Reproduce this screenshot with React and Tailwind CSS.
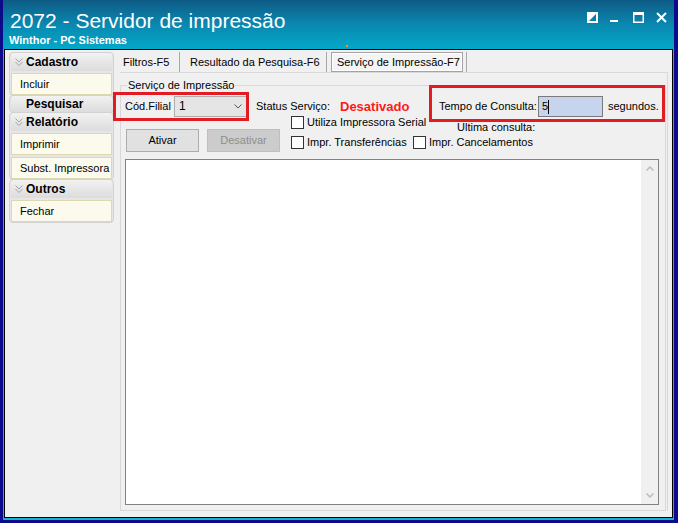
import React from 'react';

function Chevrons() {
  return (
    <svg width="8" height="10" viewBox="0 0 8 10" fill="none" stroke="#a3a3a3" strokeWidth="1">
      <path d="M0.5 1.5l3.5 3.5 3.5-3.5" />
      <path d="M0.5 5l3.5 3.5 3.5-3.5" />
    </svg>
  );
}

function Group({ title, items = [], chevron = true, head = 'h-[18px]', first = false }) {
  return (
    <div className={`rounded-[4px] border border-[#d2d2d2] bg-[#e6e6e6] px-[1px] ${first ? '' : '-mt-px'}`}>
      <div className={`${head} flex items-center rounded-t-[3px] bg-gradient-to-b from-[#f2f2f2] to-[#dcdcdc]`}>
        <span className="w-[15px] flex justify-center">{chevron && <Chevrons />}</span>
        <span className="font-bold text-[12px] leading-[14px]">{title}</span>
      </div>
      {items.map(it => (
        <div key={it} className="mt-[2px] h-[22px] flex items-center pl-[8px] bg-[#fbfaec] border border-[#dcd8b2] whitespace-nowrap">
          {it}
        </div>
      ))}
    </div>
  );
}

function Check({ label, w }) {
  return (
    <div className={`flex items-center ${w || ''}`}>
      <div className="w-[13px] h-[13px] border border-[#333] bg-white" />
      <span className="ml-[3px] whitespace-nowrap">{label}</span>
    </div>
  );
}

export default function App() {
  return (
    <div className="relative w-[678px] h-[523px] bg-[#0b0b8c] pl-[3px] pr-[4px] pb-[3px] flex font-['Liberation_Sans',Arial,sans-serif] text-[11px] leading-[13px] text-black">
      <div className="flex-1 flex flex-col bg-[#14b4cc]">
        {/* barra de título */}
        <div className="relative h-[49px] flex justify-between bg-gradient-to-b from-[#0d5b85] via-[#0a88b0] to-[#02a8c8]">
          <div className="pl-[7px] pt-[10px] text-white">
            <div className="text-[21px] leading-[21px]">2072 - Servidor de impressão</div>
            <div className="mt-[3px] -ml-px font-bold text-[11px] leading-[13px]">Winthor - PC Sistemas</div>
          </div>
          <div className="flex items-start pt-[12px] pr-[7px]">
            <svg width="11" height="11" viewBox="0 0 11 11">
              <rect x="1" y="1" width="9" height="9" fill="none" stroke="#fff" strokeWidth="2" />
              <polygon points="0,0 11,0 0,11" fill="#fff" />
            </svg>
            <svg className="ml-[12px]" width="8" height="11" viewBox="0 0 8 11">
              <rect x="0" y="8" width="8" height="2" fill="#fff" />
            </svg>
            <svg className="ml-[15px]" width="11" height="11" viewBox="0 0 11 11">
              <rect x="0.75" y="1.5" width="9.5" height="8.75" fill="none" stroke="#fff" strokeWidth="1.5" />
              <rect x="0" y="0" width="11" height="3" fill="#fff" />
            </svg>
            <svg className="ml-[12px]" width="11" height="11" viewBox="0 0 11 11" stroke="#fff" strokeWidth="2">
              <path d="M1 1l9 9M10 1l-9 9" />
            </svg>
          </div>
          <div className="absolute left-[343px] top-[45px] w-[2px] h-[2px] bg-[#f7941d]" />
        </div>

        {/* corpo */}
        <div className="mx-[1px] h-[469px] border border-black bg-[#f0f0f0] flex">
          {/* menu lateral */}
          <div className="ml-[4px] mt-[2px] w-[105px] shrink-0">
            <Group title="Cadastro" items={['Incluir']} first />
            <Group title="Pesquisar" chevron={false} head="h-[16px]" />
            <Group title="Relatório" items={['Imprimir', 'Subst. Impressora']} />
            <Group title="Outros" items={['Fechar']} />
          </div>

          {/* área principal */}
          <div className="ml-[6px] mr-[4px] mb-[6px] flex-1 flex flex-col">
            <div className="h-[22px] flex items-end">
              <div className="w-[59px] h-[20px] pl-[3px] flex items-center">Filtros-F5</div>
              <div className="w-px h-[20px] bg-[#a8a8a8]" />
              <div className="w-[146px] h-[20px] pl-[10px] flex items-center whitespace-nowrap">Resultado da Pesquisa-F6</div>
              <div className="w-px h-[20px] bg-[#a8a8a8]" />
              <div className="ml-[4px] w-[132px] h-[20px] pl-[5px] flex items-center whitespace-nowrap bg-[#f4f4f4] border border-[#a3a3a3] shadow-[inset_1px_1px_0_#fff,inset_-1px_-1px_0_#fff]">
                Serviço de Impressão-F7
              </div>
              <div className="ml-[3px] w-px h-[20px] bg-[#a8a8a8]" />
            </div>

            <div className="flex-1 flex flex-col border-t border-r border-[#d9d9d9] pt-[12px]">
              <div className="relative flex-1 flex flex-col mr-px border border-[#d9d9d9]">
                <span className="absolute -top-[7px] left-[6px] px-px bg-[#f0f0f0] leading-[13px]">Serviço de Impressão</span>

                {/* linha 1 */}
                <div className="mt-[10px] pl-[4px] h-[21px] flex items-center">
                  <span className="w-[49px]">Cód.Filial</span>
                  <div className="w-[73px] h-[21px] flex items-center justify-between pl-[4px] pr-[4px] bg-[#e5e5e5] border border-[#adadad]">
                    <span className="text-[12px]">1</span>
                    <svg width="8" height="5" viewBox="0 0 8 5" fill="none" stroke="#555" strokeWidth="1">
                      <path d="M0.5 0.5l3.5 3.5 3.5-3.5" />
                    </svg>
                  </div>
                  <span className="ml-[9px] w-[84px]">Status Serviço:</span>
                  <span className="w-[99px] font-bold text-[13px] text-[#ff1a1a]">Desativado</span>
                  <span className="w-[99px] whitespace-nowrap">Tempo de Consulta:</span>
                  <div className="w-[65px] h-[21px] flex items-center pl-[3px] bg-[#c6d4ee] border border-[#7a7a7a]">
                    <span>5</span>
                    <span className="w-px h-[14px] bg-black" />
                  </div>
                  <span className="ml-[5px]">segundos.</span>
                </div>

                {/* linha 2 */}
                <div className="-mt-px flex items-start">
                  <div className="ml-[5px] pt-[13px] flex">
                    <button className="w-[73px] h-[23px] bg-[#e1e1e1] border border-[#adadad]">Ativar</button>
                    <button className="ml-[8px] w-[73px] h-[23px] bg-[#cccccc] border border-[#bfbfbf] text-[#8d8d8d]">Desativar</button>
                  </div>
                  <div className="ml-[11px]">
                    <div className="h-[20px] flex items-start">
                      <Check label="Utiliza Impressora Serial" w="w-[166px]" />
                      <span className="mt-[5px] whitespace-nowrap">Ultima consulta:</span>
                    </div>
                    <div className="flex items-center">
                      <Check label="Impr. Transferências" w="w-[122px]" />
                      <Check label="Impr. Cancelamentos" />
                    </div>
                  </div>
                </div>

                {/* memo */}
                <div className="mt-[7px] ml-[4px] mr-[6px] mb-[5px] flex-1 flex bg-white border border-[#828282]">
                  <div className="flex-1" />
                  <div className="w-[17px] bg-[#f0f0f0] flex flex-col items-center justify-between py-[6px]">
                    <svg width="8" height="5" viewBox="0 0 8 5" fill="none" stroke="#bdbdbd" strokeWidth="1.5">
                      <path d="M0.5 4.5l3.5-3.5 3.5 3.5" />
                    </svg>
                    <svg width="8" height="5" viewBox="0 0 8 5" fill="none" stroke="#bdbdbd" strokeWidth="1.5">
                      <path d="M0.5 0.5l3.5 3.5 3.5-3.5" />
                    </svg>
                  </div>
                </div>
              </div>
            </div>
          </div>
        </div>
      </div>

      {/* destaques em vermelho */}
      <div className="absolute left-[113px] top-[92px] w-[136px] h-[29px] border-[3px] border-[#e31b23]" />
      <div className="absolute left-[429px] top-[85px] w-[236px] h-[37px] border-[3px] border-[#e31b23]" />
    </div>
  );
}
